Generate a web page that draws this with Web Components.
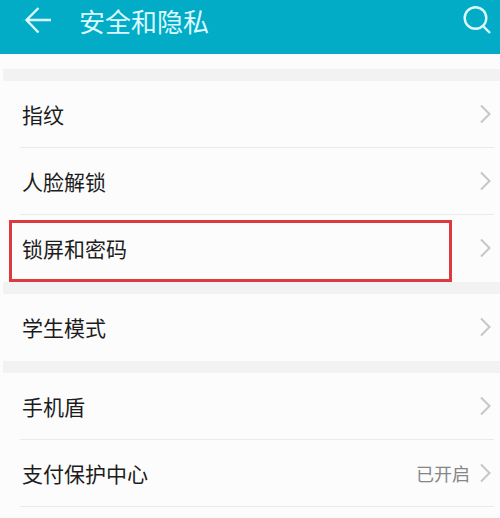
<!DOCTYPE html>
<html lang="zh-CN">
<head>
<meta charset="utf-8">
<meta name="viewport" content="width=device-width, initial-scale=1">
<title>安全和隐私</title>
<style>
    body {
        margin: 0;
        background: #fcfcfc;
        color: #1c1c1c;
        font-family: "Noto Sans CJK SC", sans-serif;
    }
</style>
</head>
<body>
<settings-bar>安全和隐私</settings-bar>
<main>
    <settings-group>
        <settings-item>指纹</settings-item>
        <settings-item>人脸解锁</settings-item>
        <settings-item marked>锁屏和密码</settings-item>
    </settings-group>
    <settings-group>
        <settings-item>学生模式</settings-item>
    </settings-group>
    <settings-group open-end>
        <settings-item>手机盾</settings-item>
        <settings-item>支付保护中心<span slot="status">已开启</span></settings-item>
    </settings-group>
</main>

<script>
class SettingsBar extends HTMLElement {
    constructor(){
        super();
        this.shadowDOM=this.attachShadow({mode: "open"});
    }
    connectedCallback(){
        this.render();
    }

    render() {
        this.shadowDOM.innerHTML = `
        <style>
        :host {
            display: block;
            background: #02acc7;
            color: #dcfaff;
            margin-bottom: 15px;
        }

        header {
            display: flex;
            align-items: center;
            height: 42px;
            padding: 0 8px 12px 24px;
        }

        h1 {
            flex: 1;
            margin: 0 0 0 27px;
            font-size: 26px;
            line-height: 42px;
            font-weight: 400;
        }

        button {
            display: flex;
            padding: 0;
            border: 0;
            background: none;
            color: inherit;
            cursor: pointer;
        }

        svg {
            display: block;
            fill: none;
            stroke: currentColor;
            stroke-width: 2.4;
        }
        </style>
        <header>
            <button type="button" aria-label="返回">
                <svg width="28" height="28" viewBox="0 0 28 28"><path d="M14.5 1 2.5 13 14.5 25.5M2.5 13H27"/></svg>
            </button>
            <h1><slot></slot></h1>
            <button type="button" aria-label="搜索">
                <svg width="30" height="30" viewBox="0 0 30 30"><circle cx="13.5" cy="12" r="10.8"/><path d="M21 20 28 27"/></svg>
            </button>
        </header>
        `;
    }
}
customElements.define("settings-bar", SettingsBar);

class SettingsGroup extends HTMLElement {
    constructor(){
        super();
        this.shadowDOM=this.attachShadow({mode: "open"});
    }
    connectedCallback(){
        this.render();
    }

    render() {
        this.shadowDOM.innerHTML = `
        <style>
        :host {
            display: block;
            margin-left: 3px;
            border-top: 12px solid #f2f2f2;
        }

        ::slotted(settings-item:last-of-type) {
            --line: transparent;
        }

        :host([open-end]) ::slotted(settings-item:last-of-type) {
            --line: #ebebeb;
        }
        </style>
        <slot></slot>
        `;
    }
}
customElements.define("settings-group", SettingsGroup);

class SettingsItem extends HTMLElement {
    constructor(){
        super();
        this.shadowDOM=this.attachShadow({mode: "open"});
    }
    connectedCallback(){
        this.render();
    }

    render() {
        this.shadowDOM.innerHTML = `
        <style>
        :host {
            display: block;
            position: relative;
        }

        a {
            display: flex;
            align-items: center;
            height: 66px;
            margin: 0 6px 0 17px;
            padding: 0 3px 0 2px;
            border-bottom: 1px solid var(--line, #ebebeb);
            color: inherit;
            font-size: 21px;
            text-decoration: none;
        }

        .label {
            flex: 1;
        }

        .status {
            margin-right: 10px;
            color: #868686;
            font-size: 18px;
        }

        svg {
            fill: none;
            stroke: #c6c6c6;
            stroke-width: 2;
        }

        /* red frame over a marked row */
        :host([marked])::after {
            content: "";
            position: absolute;
            top: 5px;
            right: 48px;
            bottom: 0;
            left: 6px;
            border: 3px solid #dc3a3e;
            pointer-events: none;
        }
        </style>
        <a href="#">
            <span class="label"><slot></slot></span>
            <span class="status"><slot name="status"></slot></span>
            <svg width="11" height="20" viewBox="0 0 11 20"><path d="M1 1.5 9.5 10 1 18.5"/></svg>
        </a>
        `;
    }
}
customElements.define("settings-item", SettingsItem);
</script>
</body>
</html>
